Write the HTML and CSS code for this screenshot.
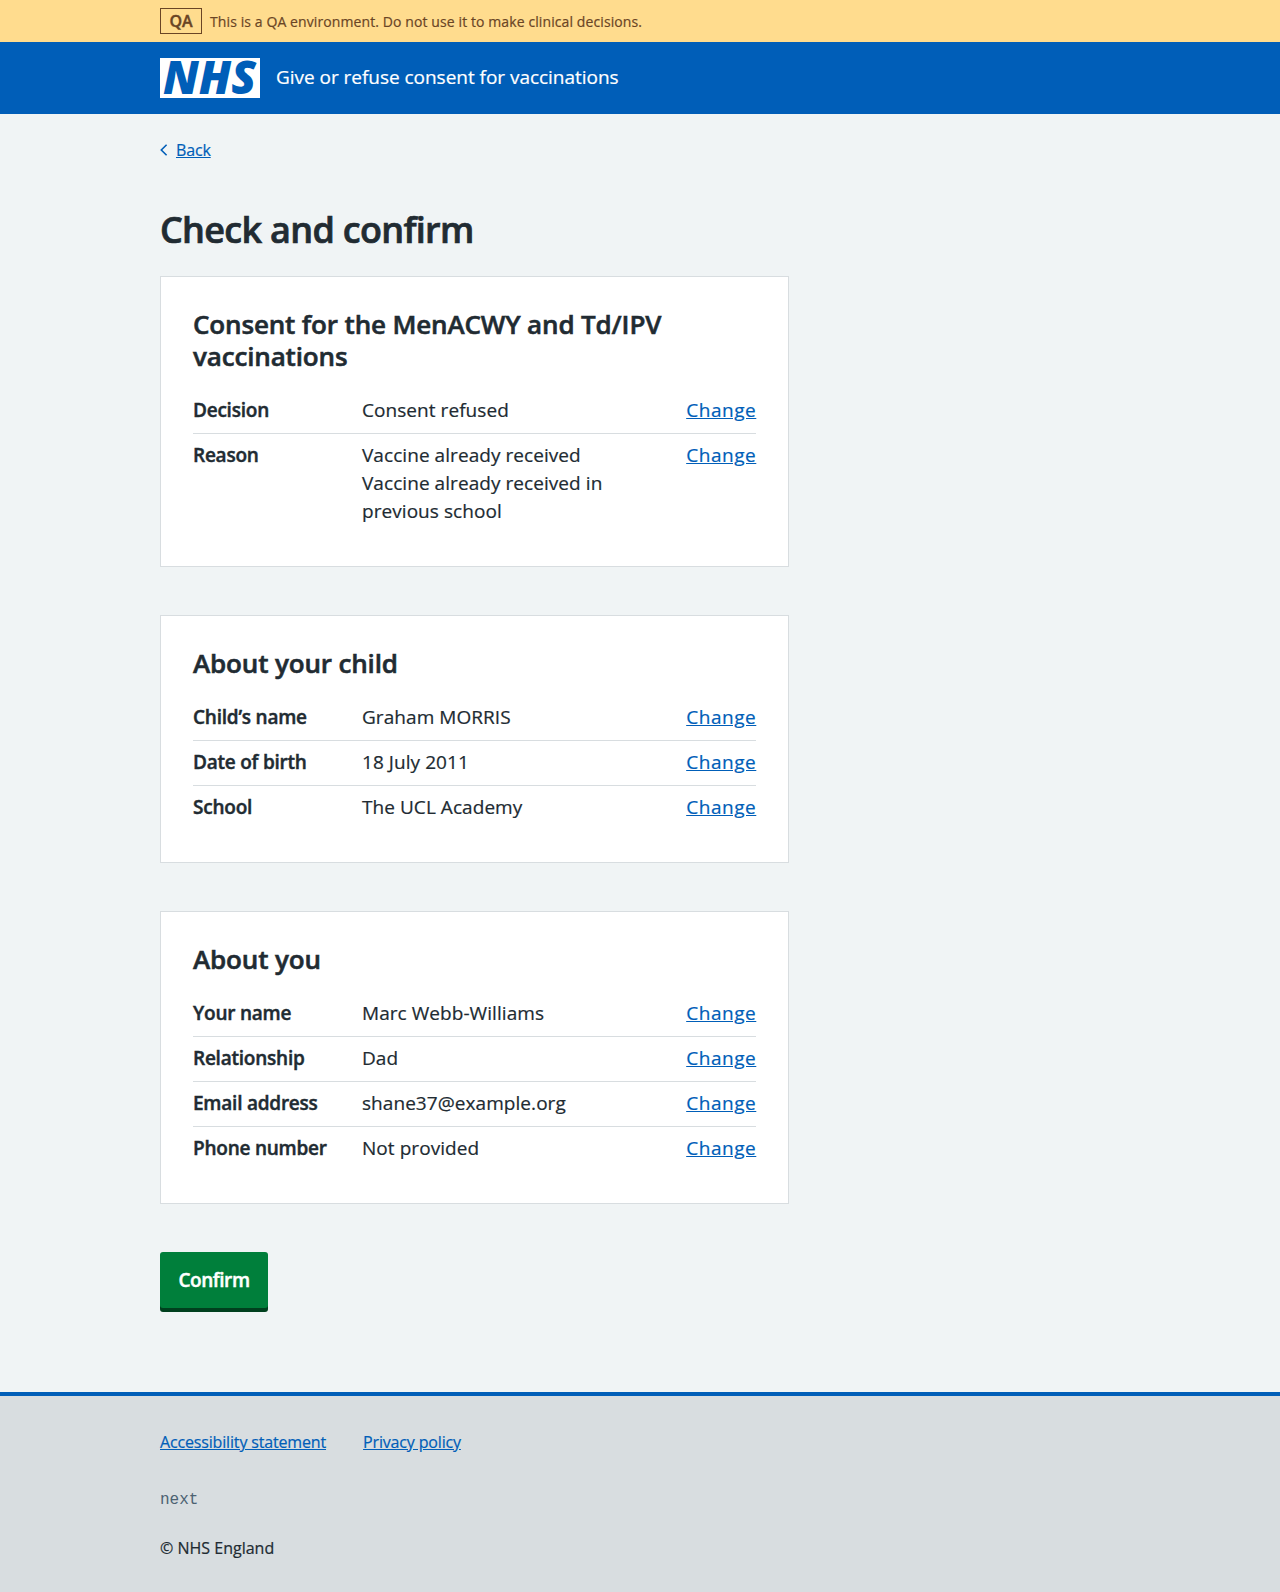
FILE: index.html
```html
<!DOCTYPE html>
<html lang="en">
<head>
<meta charset="utf-8">
<title>Check and confirm</title>
<link rel="stylesheet" href="styles.css">
</head>
<body>
<div class="environment">
  <div class="container environment-inner">
    <strong class="environment-tag">QA</strong>
    <span class="environment-text">This is a QA environment. Do not use it to make clinical decisions.</span>
  </div>
</div>
<header class="header">
  <div class="container header-inner">
    <svg class="logo" viewBox="0 0 100 40" width="100" height="40" role="img" aria-label="NHS">
      <rect width="100" height="40" fill="#fff"/>
      <text class="logo-text" x="3" y="36.4" textLength="93" lengthAdjust="spacingAndGlyphs">NHS</text>
    </svg>
    <span class="service-name">Give or refuse consent for vaccinations</span>
  </div>
</header>
<div class="container page">
  <a class="back" href="#"><svg class="back-icon" viewBox="0 0 8 12" width="8" height="12" aria-hidden="true"><path d="M6.6 .8 1.3 6l5.3 5.2" fill="none" stroke="currentColor" stroke-width="1.6"/></svg><span class="back-text">Back</span></a>
  <main class="main">
    <h1 class="title">Check and confirm</h1>
    <section class="card">
      <h2 class="card-title">Consent for the MenACWY and Td/IPV vaccinations</h2>
      <dl class="summary">
        <div class="row"><dt class="key">Decision</dt><dd class="value">Consent refused</dd><dd class="action"><a class="link" href="#">Change</a></dd></div>
        <div class="row"><dt class="key">Reason</dt><dd class="value">Vaccine already received<br>Vaccine already received in previous school</dd><dd class="action"><a class="link" href="#">Change</a></dd></div>
      </dl>
    </section>
    <section class="card">
      <h2 class="card-title">About your child</h2>
      <dl class="summary">
        <div class="row"><dt class="key">Child’s name</dt><dd class="value">Graham MORRIS</dd><dd class="action"><a class="link" href="#">Change</a></dd></div>
        <div class="row"><dt class="key">Date of birth</dt><dd class="value">18 July 2011</dd><dd class="action"><a class="link" href="#">Change</a></dd></div>
        <div class="row"><dt class="key">School</dt><dd class="value">The UCL Academy</dd><dd class="action"><a class="link" href="#">Change</a></dd></div>
      </dl>
    </section>
    <section class="card">
      <h2 class="card-title">About you</h2>
      <dl class="summary">
        <div class="row"><dt class="key">Your name</dt><dd class="value">Marc Webb-Williams</dd><dd class="action"><a class="link" href="#">Change</a></dd></div>
        <div class="row"><dt class="key">Relationship</dt><dd class="value">Dad</dd><dd class="action"><a class="link" href="#">Change</a></dd></div>
        <div class="row"><dt class="key">Email address</dt><dd class="value">shane37@example.org</dd><dd class="action"><a class="link" href="#">Change</a></dd></div>
        <div class="row"><dt class="key">Phone number</dt><dd class="value">Not provided</dd><dd class="action"><a class="link" href="#">Change</a></dd></div>
      </dl>
    </section>
    <button class="button" type="button">Confirm</button>
  </main>
</div>
<footer class="footer">
  <div class="container">
    <nav class="footer-links"><a class="link" href="#">Accessibility statement</a><a class="link" href="#">Privacy policy</a></nav>
    <p class="version">next</p>
    <p class="copyright">© NHS England</p>
  </div>
</footer>
</body>
</html>
```
FILE: styles.css
```css
* { box-sizing: border-box; }

body {
  display: flex;
  flex-direction: column;
  min-height: 1592px;
  margin: 0;
  background: #f0f4f5;
  color: #212b32;
  font: 400 19px/28px "Open Sans", Arial, sans-serif;
  -webkit-text-stroke: .2px currentColor;
}

.container { width: 960px; margin: 0 auto; }

.environment { background: #ffdc8e; color: #6a4525; }
.environment-inner { display: flex; align-items: center; gap: 8px; height: 42px; }
.environment-tag {
  width: 42px;
  height: 26px;
  border: 1px solid #6a4525;
  font-size: 16px;
  font-weight: 600;
  line-height: 25px;
  text-align: center;
  -webkit-text-stroke-width: .4px;
}
.environment-text { padding-top: 2px; font-size: 14px; line-height: 24px; letter-spacing: .1px; }

.header { background: #005eb8; color: #fff; }
.header-inner { display: flex; align-items: center; gap: 16px; height: 72px; }
.logo { display: block; overflow: visible; }
.logo-text { fill: #005eb8; stroke: none; font: italic 800 45.5px "Open Sans", sans-serif; -webkit-text-stroke-width: 0; }
.service-name { padding-bottom: 2px; letter-spacing: -.03px; }

.page { flex: 1; }
.back {
  display: flex;
  align-items: center;
  gap: 8px;
  width: max-content;
  margin-top: 24px;
  color: #005eb8;
  font-size: 16px;
  line-height: 24px;
  letter-spacing: -.15px;
  text-decoration: none;
}
.back-text { text-decoration: underline; }
.main { width: 629.33px; padding-top: 46px; }
.title {
  margin: 0;
  padding-bottom: 24px;
  font-size: 36px;
  font-weight: 600;
  line-height: 44px;
  letter-spacing: -.7px;
  -webkit-text-stroke-width: .7px;
}

.card { margin-bottom: 48px; padding: 32px; border: 1px solid #d8dde0; background: #fff; }
.card-title {
  margin: -1px 0 17px;
  font-size: 26px;
  font-weight: 600;
  line-height: 32px;
  letter-spacing: -.15px;
  -webkit-text-stroke-width: .55px;
}
.summary { margin: 0; }
.row { display: grid; grid-template-columns: 30% 50% 20%; padding: 7px 0 9px; border-bottom: 1px solid #d8dde0; }
.row:last-child { border-bottom: 0; }
.key { font-weight: 600; letter-spacing: -.23px; -webkit-text-stroke-width: .45px; }
.value { margin: 0; padding-right: 16px; letter-spacing: .06px; }
.action { margin: 0; text-align: right; }
.action .link { letter-spacing: .55px; }
.link { color: #005eb8; text-decoration: underline; }

.button {
  display: block;
  width: 108px;
  height: 56px;
  padding: 0;
  border: 0;
  border-radius: 3px;
  background: #007f3b;
  box-shadow: 0 4px 0 #00401e;
  color: #fff;
  font: 600 19px/28px "Open Sans", Arial, sans-serif;
  letter-spacing: -.43px;
  -webkit-text-stroke: .45px #fff;
}

.footer { height: 200px; padding-top: 34px; border-top: 4px solid #005eb8; background: #d8dde0; font-size: 16px; line-height: 24px; }
.footer-links { display: flex; gap: 37px; letter-spacing: -.16px; }
.version { margin: 34px 0 24px; color: #4c6272; font-family: "Liberation Mono", monospace; -webkit-text-stroke-width: 0; }
.copyright { margin: 0; }
```
